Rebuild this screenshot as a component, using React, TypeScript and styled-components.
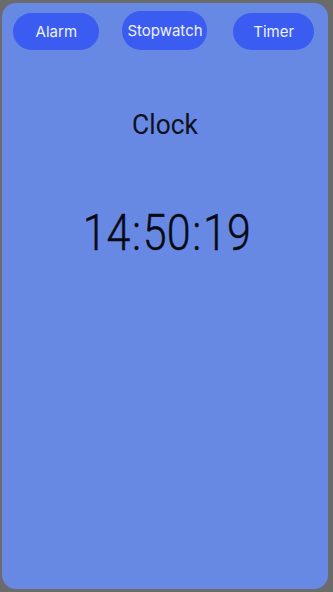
import React from "react";
import styled, { createGlobalStyle } from "styled-components";

const Global = createGlobalStyle`
  html, body { margin: 0; padding: 0; background: #6b6b6b; }
  body { font-family: Inter, "Noto Sans", sans-serif; }
`;

const Panel = styled.div`
  margin: 3px 5px 3px 2px;
  height: 586px;
  box-sizing: border-box;
  background: #6889e3;
  border-radius: 14px;
  padding: 9px 0 0;
  display: flex;
  flex-direction: column;
  align-items: center;
`;

const Nav = styled.nav`
  width: 100%;
  display: grid;
  grid-template-columns: repeat(3, 1fr);
  justify-items: center;
  align-items: center;
  height: 38px;
`;

const NavButton = styled.button<{ $w: number; $tall?: boolean }>`
  width: ${(p) => p.$w}px;
  height: ${(p) => (p.$tall ? 39 : 37)}px;
  margin-top: ${(p) => (p.$tall ? -1 : 0)}px;
  border: none;
  border-radius: 19px;
  background: #3b5cf1;
  color: #eef1ff;
  font-family: Inter, "Noto Sans", sans-serif;
  font-size: 15px;
  padding: 0;
  cursor: pointer;
`;

const Title = styled.h1`
  margin: 58px 0 0;
  font-family: Roboto, sans-serif;
  font-weight: 400;
  font-size: 28px;
  color: #0d1020;
  line-height: normal;
  transform: scaleX(0.94);
`;

const Time = styled.div`
  margin-top: 63px;
  margin-left: 3px;
  display: flex;
  font-family: Roboto, sans-serif;
  font-weight: 300;
  font-size: 50px;
  color: #070914;
  line-height: normal;
  transform: scaleX(0.86);
  -webkit-text-stroke: 0.4px #070914;
`;

const Colon = styled.span`
  margin: 0 2px;
`;

export default function App() {
  const parts = ["14", "50", "19"];
  return (
    <>
      <Global />
      <Panel>
        <Nav>
          <NavButton $w={86}>Alarm</NavButton>
          <NavButton $w={85} $tall>
            Stopwatch
          </NavButton>
          <NavButton $w={81}>Timer</NavButton>
        </Nav>
        <Title>Clock</Title>
        <Time>
          {parts.map((p, i) => (
            <React.Fragment key={i}>
              {i > 0 && <Colon>:</Colon>}
              <span>{p}</span>
            </React.Fragment>
          ))}
        </Time>
      </Panel>
    </>
  );
}
